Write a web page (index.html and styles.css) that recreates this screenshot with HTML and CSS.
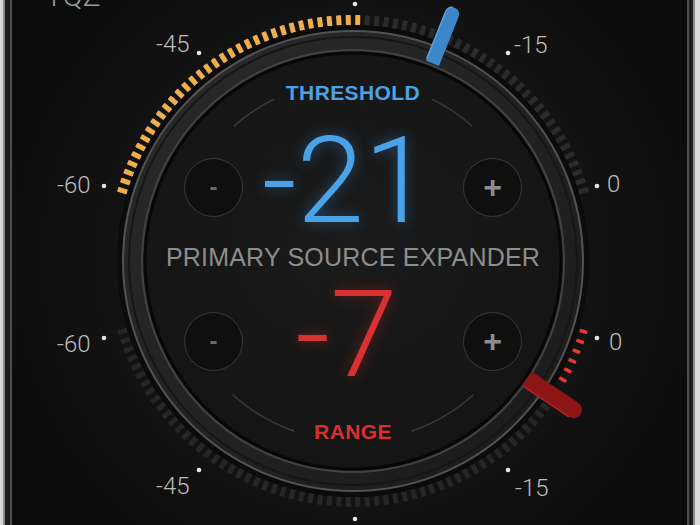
FILE: index.html
```html
<!DOCTYPE html>
<html lang="en">
  <head>
    <meta charset="UTF-8" />
    <meta name="viewport" content="width=device-width, initial-scale=1.0" />
    <title>Primary Source Expander</title>
    <link rel="stylesheet" href="styles.css">
  </head>
  <body>
    <div class="shell">
      <div class="case">
        <div class="screen">
          <svg class="dial" viewBox="12 0 675 525" xmlns="http://www.w3.org/2000/svg">
            <defs>
              <radialGradient id="glow" cx="353" cy="261" r="360" gradientUnits="userSpaceOnUse">
                <stop offset="0" stop-color="#191919" />
                <stop offset="0.7" stop-color="#121212" />
                <stop offset="1" stop-color="#0c0c0c" />
              </radialGradient>
              <linearGradient id="bezel" x1="0" y1="0" x2="1" y2="1">
                <stop offset="0" stop-color="#2a2a2a" />
                <stop offset="1" stop-color="#1a1a1a" />
              </linearGradient>
              <radialGradient id="face" cx="0.5" cy="0.45" r="0.6">
                <stop offset="0" stop-color="#1b1b1b" />
                <stop offset="1" stop-color="#141414" />
              </radialGradient>
            </defs>

            <rect x="12" y="0" width="675" height="525" fill="url(#glow)" />
            <text class="brand" x="45" y="6">TQZ</text>

            <!-- scale ticks are added by the script below -->
            <g id="ticks"></g>

            <!-- bezel -->
            <circle cx="353" cy="261" r="236" fill="#0b0b0b" />
            <circle cx="353" cy="261" r="230" fill="url(#bezel)" stroke="#525252" stroke-width="2" />
            <circle cx="353" cy="261" r="224" fill="none" stroke="#161616" stroke-width="2" />
            <circle cx="353" cy="261" r="211" fill="none" stroke="#424242" stroke-width="2" />
            <circle cx="353" cy="261" r="208" fill="url(#face)" stroke="#070707" stroke-width="3" />

            <!-- face arcs -->
            <g fill="none" stroke="#3a3a3a" stroke-width="1.5">
              <path d="M233.7 126.2 A180 180 0 0 1 274.1 99.2" />
              <path d="M431.9 99.2 A180 180 0 0 1 472.3 126.2" />
              <path d="M232.6 394.8 A180 180 0 0 0 294.4 431.2" />
              <path d="M411.6 431.2 A180 180 0 0 0 473.4 394.8" />
            </g>

            <!-- handles -->
            <g transform="translate(353 261) rotate(21.9)">
              <path d="M-7 -213 V-266 A7 7 0 0 1 7 -266 V-213 Z" fill="#3d87c9" />
              <path d="M-7 -215 V-266 A7 7 0 0 1 -2 -272.6" fill="none" stroke="#5aa2de" stroke-width="1.5" />
            </g>
            <g transform="translate(353 261) rotate(-56)">
              <path d="M-8.5 210 V266 A8.5 8.5 0 0 0 8.5 266 V210 Z" fill="#8e1515" />
              <path d="M-8.5 211 V266" stroke="#b12222" stroke-width="1.5" />
            </g>

            <!-- scale dots -->
            <g fill="#e4e4e4">
              <circle cx="104" cy="186" r="2.3" />
              <circle cx="199" cy="53" r="2.3" />
              <circle cx="355" cy="4" r="2.3" />
              <circle cx="508" cy="53" r="2.3" />
              <circle cx="597" cy="186" r="2.3" />
              <circle cx="104" cy="338" r="2.3" />
              <circle cx="199" cy="470" r="2.3" />
              <circle cx="355" cy="519" r="2.3" />
              <circle cx="508" cy="470" r="2.3" />
              <circle cx="597" cy="338" r="2.3" />
            </g>

            <!-- scale labels -->
            <g class="scale">
              <text x="156" y="52">-45</text>
              <text x="514" y="53">-15</text>
              <text x="57" y="193">-60</text>
              <text x="607" y="192">0</text>
              <text x="57" y="352">-60</text>
              <text x="609" y="350">0</text>
              <text x="156" y="494">-45</text>
              <text x="515" y="496">-15</text>
            </g>
          </svg>

          <main class="panel">
            <div class="label threshold">THRESHOLD</div>
            <div class="control top">
              <button class="step minus">-</button>
              <div class="value blue">-21</div>
              <button class="step plus">+</button>
            </div>
            <div class="caption">PRIMARY SOURCE EXPANDER</div>
            <div class="control bottom">
              <button class="step minus">-</button>
              <div class="value red">-7</div>
              <button class="step plus">+</button>
            </div>
            <div class="label range">RANGE</div>
          </main>
        </div>
      </div>
    </div>

    <script>
      const ns = "http://www.w3.org/2000/svg";
      const cx = 353;
      const cy = 261;
      const ticks = document.getElementById("ticks");

      function addTick(angle, color, inner, len, width) {
        const r = document.createElementNS(ns, "rect");
        r.setAttribute("x", -width / 2);
        r.setAttribute("y", -(inner + len));
        r.setAttribute("width", width);
        r.setAttribute("height", len);
        r.setAttribute("rx", 0.8);
        r.setAttribute("fill", color);
        r.setAttribute("transform", `translate(${cx} ${cy}) rotate(${angle})`);
        ticks.appendChild(r);
      }

      const step = 146 / 65;

      // threshold scale (top)
      for (let i = 0; i <= 65; i++) {
        const a = -73 + i * step;
        addTick(a, a <= 2.5 ? "#eeae4f" : "#2b2b2b", 236, 10, 5);
      }

      // range scale (bottom, mirrored)
      for (let i = 0; i <= 65; i++) {
        const a = -73 + i * step;
        if (a > 57.5) continue;
        addTick(180 - a, "#262626", 236, 10, 5);
      }
      for (let i = 0; i < 6; i++) {
        addTick(180 - (73 - i * 2.5), "#e53935", 237, 8, 3.5);
      }
    </script>
  </body>
</html>
```

FILE: styles.css
```css
body {
  margin: 0;
  background-color: #d8d8d8;
  font-family: "Liberation Sans", Arial, sans-serif;
}

.shell {
  box-sizing: border-box;
  width: 700px;
  height: 525px;
  display: flex;
  padding: 0 5px 0 3px;
  background-color: #d8d8d8;
  overflow: hidden;
}

.case {
  flex: 1;
  display: flex;
  padding: 0 4px 0 5px;
  background-color: #1c1c1c;
  border-left: 2px solid #8a8a8a;
  border-right: 2px solid #8a8a8a;
}

.screen {
  flex: 1;
  display: grid;
  background-color: #0f0f0f;
  border-left: 2px solid #4e4e4e;
  border-right: 2px solid #4e4e4e;
  overflow: hidden;
}

.dial,
.panel {
  grid-area: 1 / 1;
}

.dial {
  display: block;
  width: 675px;
  height: 525px;
}

.brand {
  font-family: Roboto, sans-serif;
  font-weight: 300;
  font-size: 30px;
  fill: #9a9a9a;
}

.scale text {
  font-family: Roboto, sans-serif;
  font-weight: 300;
  font-size: 24px;
  fill: #bcbcbc;
}

.panel {
  display: flex;
  flex-direction: column;
  align-items: center;
  padding: 81px 0 0 7px;
}

.label {
  font-weight: 700;
  font-size: 21px;
  line-height: 24px;
  letter-spacing: 0.4px;
}

.threshold {
  color: #4aa3e8;
}

.range {
  color: #d9302f;
  margin-top: 29px;
}

.control {
  width: 338px;
  height: 100px;
  display: flex;
  align-items: center;
  justify-content: space-between;
}

.control.top {
  margin-top: 32px;
}

.control.bottom {
  margin-top: 19px;
}

.value {
  font-family: Roboto, sans-serif;
  font-weight: 300;
  font-size: 121px;
  line-height: 100px;
  margin: 0 13px 13px 0;
}

.value.blue {
  color: #4ba2e6;
  text-shadow: 0 0 14px rgba(60, 150, 230, 0.45);
}

.value.red {
  color: #d83131;
  text-shadow: 0 0 14px rgba(220, 40, 40, 0.4);
}

.caption {
  margin-top: 5px;
  font-size: 25px;
  line-height: 30px;
  letter-spacing: 0.2px;
  color: #8d8d8d;
}

.step {
  box-sizing: border-box;
  width: 59px;
  height: 59px;
  padding: 0;
  display: flex;
  align-items: center;
  justify-content: center;
  border-radius: 50%;
  border: 1.5px solid #3a3a3a;
  background-color: #0f0f0f;
  font-family: "Liberation Sans", Arial, sans-serif;
  line-height: 1;
}

.step.minus {
  color: #6c6c6c;
  font-size: 24px;
  font-weight: 700;
}

.step.plus {
  color: #8d8d8d;
  font-size: 32px;
  font-weight: 700;
}
```
